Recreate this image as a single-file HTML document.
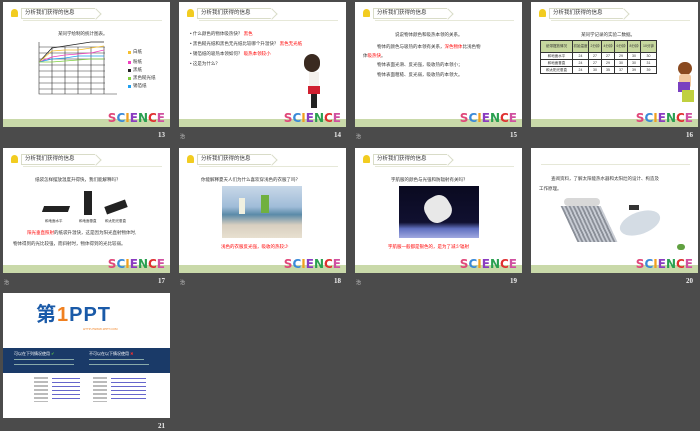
<!DOCTYPE html>
<html><head><meta charset="utf-8"><style>
*{margin:0;padding:0;box-sizing:border-box}
body{width:700px;height:431px;background:#4b4b4b;position:relative;overflow:hidden;font-family:"Liberation Sans","Noto Sans CJK SC",sans-serif}
.s{position:absolute;width:167px;height:125px;background:#fff;overflow:hidden}
.band{position:absolute;left:0;right:0;bottom:0;height:8px;background:#c9d9a9}
.hd{position:absolute;left:8px;top:6px;height:11px;width:90px}
.ic{position:absolute;left:0;top:1px;width:7px;height:8px;background:#f2cc20;border-radius:4px 4px 1px 1px}
.lb{position:absolute;left:10px;top:0;width:74px;height:11px;border:1px solid #d9dcc8;border-right:none;font-size:5.5px;line-height:9px;padding-left:3px;color:#333;background:#fff}
.lb:after{content:"";position:absolute;right:-5px;top:1px;width:7px;height:7px;border-top:1px solid #d9dcc8;border-right:1px solid #d9dcc8;transform:rotate(45deg);background:#fff}
.ln{position:absolute;left:20px;right:8px;top:18px;height:1px;background:#e6e8d8}
.sci{position:absolute;right:5px;bottom:2px;font-size:12px;font-weight:bold;letter-spacing:0px;font-family:"DejaVu Sans",sans-serif;line-height:13px}
.sci span:nth-child(1){color:#e0487a}.sci span:nth-child(2){color:#3a8ad8}.sci span:nth-child(3){color:#f0a020}.sci span:nth-child(4){color:#8a3cc0}.sci span:nth-child(5){color:#2aa050}.sci span:nth-child(6){color:#e03030}.sci span:nth-child(7){color:#d050a0}
.t{position:absolute;font-size:4.5px;color:#333;white-space:nowrap;line-height:6px}
.r{color:#f00}
.n{position:absolute;font-size:7px;color:#eee;font-weight:bold;font-family:"Liberation Serif",serif}
.z{position:absolute;font-size:5px;color:#ccc}
</style></head><body>

<!-- 13 -->
<div class="s" style="left:3px;top:2px">
<div class="hd"><div class="ic"></div><div class="lb">分析我们获得的信息</div></div><div class="ln"></div>
<div class="t" style="left:55px;top:29px">某同学绘制的统计图表。</div>
<svg style="position:absolute;left:14px;top:36px" width="110" height="62">
<g stroke="#333" stroke-width="0.6" fill="none">
<path d="M22 4V56H100"/>
<path d="M22 9H88M22 15H88M22 21H88M22 27H88M22 33H88M22 39H88M22 45H88M22 51H88M35 9V56M48 9V56M61 9V56M74 9V56M87 9V56"/>
</g>
<polyline points="22,24 35,10 48,8 61,6 74,4 87,4" stroke="#222" fill="none" stroke-width="0.8"/>
<polyline points="22,24 35,13 48,12 61,12 74,10 87,8" stroke="#f5c030" fill="none" stroke-width="0.8"/>
<polyline points="22,24 35,19 48,17 61,16 74,15 87,12" stroke="#f040c0" fill="none" stroke-width="0.8"/>
<polyline points="22,24 35,21 48,20 61,18 74,18 87,18" stroke="#20a0f0" fill="none" stroke-width="0.8"/>
<polyline points="22,24 35,24 48,23 61,22 74,21 87,21" stroke="#80d040" fill="none" stroke-width="0.8"/>
</svg>
<div style="position:absolute;left:125px;top:49px;width:3px;height:3px;background:#f5c030"></div><div class="t" style="left:130px;top:47px">白纸</div>
<div style="position:absolute;left:125px;top:59px;width:3px;height:3px;background:#f040c0"></div><div class="t" style="left:130px;top:57px">粉纸</div>
<div style="position:absolute;left:125px;top:67px;width:3px;height:3px;background:#222"></div><div class="t" style="left:130px;top:65px">黑纸</div>
<div style="position:absolute;left:125px;top:75px;width:3px;height:3px;background:#80d040"></div><div class="t" style="left:130px;top:73px">黑色糙光纸</div>
<div style="position:absolute;left:125px;top:83px;width:3px;height:3px;background:#20a0f0"></div><div class="t" style="left:130px;top:81px">锡箔纸</div>
<div class="band"></div><div class="sci"><span>S</span><span>C</span><span>I</span><span>E</span><span>N</span><span>C</span><span>E</span></div></div>
<div class="n" style="left:158px;top:131px">13</div>

<!-- 14 -->
<div class="s" style="left:179px;top:2px">
<div class="hd"><div class="ic"></div><div class="lb">分析我们获得的信息</div></div><div class="ln"></div>
<div class="t" style="left:11px;top:29px">• 什么颜色的物体吸热快？ <span class="r">黑色</span></div>
<div class="t" style="left:11px;top:39px">• 黑色糙光纸和黑色无光纸比较哪个升温快？ <span class="r">黑色无光纸</span></div>
<div class="t" style="left:11px;top:49px">• 锡箔纸的吸热本领如何？ <span class="r">吸热本领较小</span></div>
<div class="t" style="left:11px;top:59px">• 这是为什么？</div>
<div style="position:absolute;left:125px;top:52px;width:16px;height:18px;background:#3a2a20;border-radius:8px"></div>
<div style="position:absolute;left:130px;top:70px;width:10px;height:16px;background:#f4f0ec"></div>
<div style="position:absolute;left:129px;top:84px;width:12px;height:8px;background:#d02030"></div>
<div style="position:absolute;left:132px;top:92px;width:6px;height:14px;background:#222"></div>
<div class="band"></div><div class="sci"><span>S</span><span>C</span><span>I</span><span>E</span><span>N</span><span>C</span><span>E</span></div></div>
<div class="z" style="left:180px;top:133px">治</div><div class="n" style="left:334px;top:131px">14</div>

<!-- 15 -->
<div class="s" style="left:355px;top:2px">
<div class="hd"><div class="ic"></div><div class="lb">分析我们获得的信息</div></div><div class="ln"></div>
<div class="t" style="left:40px;top:30px">说说物体颜色和吸热本领的关系。</div>
<div class="t" style="left:22px;top:42px">物体的颜色与吸热的本领有关系，<span class="r">深色物体</span>比浅色物</div>
<div class="t" style="left:8px;top:51px">体<span class="r">吸热快</span>。</div>
<div class="t" style="left:22px;top:60px">物体表面光滑、反光强，吸收热的本领小；</div>
<div class="t" style="left:22px;top:70px">物体表面粗糙、反光弱，吸收热的本领大。</div>
<div class="band"></div><div class="sci"><span>S</span><span>C</span><span>I</span><span>E</span><span>N</span><span>C</span><span>E</span></div></div>
<div class="z" style="left:356px;top:133px">治</div><div class="n" style="left:510px;top:131px">15</div>

<!-- 16 -->
<div class="s" style="left:531px;top:2px">
<div class="hd"><div class="ic"></div><div class="lb">分析我们获得的信息</div></div><div class="ln"></div>
<div class="t" style="left:50px;top:30px">某同学记录的实验二数据。</div>
<table style="position:absolute;left:9px;top:38px;border-collapse:collapse;font-size:3.5px;color:#333;text-align:center" cellpadding="0">
<tr style="background:#c7d89f;height:12px"><td style="border:0.6px solid #333;width:32px">纸带摆放情况</td><td style="border:0.6px solid #333;width:16px">初始温度</td><td style="border:0.6px solid #333;width:13px">2分钟</td><td style="border:0.6px solid #333;width:13px">4分钟</td><td style="border:0.6px solid #333;width:13px">6分钟</td><td style="border:0.6px solid #333;width:13px">8分钟</td><td style="border:0.6px solid #333;width:16px">10分钟</td></tr>
<tr style="height:7px"><td style="border:0.6px solid #333">和地面水平</td><td style="border:0.6px solid #333">24</td><td style="border:0.6px solid #333">27</td><td style="border:0.6px solid #333">27</td><td style="border:0.6px solid #333">29</td><td style="border:0.6px solid #333">30</td><td style="border:0.6px solid #333">30</td></tr>
<tr style="height:7px"><td style="border:0.6px solid #333">和地面垂直</td><td style="border:0.6px solid #333">24</td><td style="border:0.6px solid #333">27</td><td style="border:0.6px solid #333">29</td><td style="border:0.6px solid #333">30</td><td style="border:0.6px solid #333">30</td><td style="border:0.6px solid #333">31</td></tr>
<tr style="height:7px"><td style="border:0.6px solid #333">和太阳光垂直</td><td style="border:0.6px solid #333">24</td><td style="border:0.6px solid #333">30</td><td style="border:0.6px solid #333">35</td><td style="border:0.6px solid #333">37</td><td style="border:0.6px solid #333">39</td><td style="border:0.6px solid #333">39</td></tr>
</table>
<div style="position:absolute;left:147px;top:60px;width:14px;height:13px;background:#8a4a20;border-radius:7px"></div>
<div style="position:absolute;left:148px;top:72px;width:12px;height:14px;background:#f2c8a0;border-radius:3px"></div>
<div style="position:absolute;left:147px;top:80px;width:12px;height:10px;background:#7a40c0"></div>
<div style="position:absolute;left:151px;top:88px;width:12px;height:12px;background:#c0d040"></div>
<div class="band"></div><div class="sci"><span>S</span><span>C</span><span>I</span><span>E</span><span>N</span><span>C</span><span>E</span></div></div>
<div class="n" style="left:686px;top:131px">16</div>

<!-- 17 -->
<div class="s" style="left:3px;top:148px">
<div class="hd"><div class="ic"></div><div class="lb">分析我们获得的信息</div></div><div class="ln"></div>
<div class="t" style="left:32px;top:29px">纸袋怎样摆放温度升得快，我们能解释吗？</div>
<div style="position:absolute;left:40px;top:58px;width:26px;height:6px;background:#222;transform:skewX(-20deg)"></div>
<div style="position:absolute;left:81px;top:43px;width:8px;height:24px;background:#222"></div>
<div style="position:absolute;left:102px;top:55px;width:22px;height:8px;background:#222;transform:rotate(-20deg)"></div>
<div class="t" style="left:42px;top:70px;font-size:3.5px">和地面水平</div>
<div class="t" style="left:76px;top:70px;font-size:3.5px">和地面垂直</div>
<div class="t" style="left:102px;top:70px;font-size:3.5px">和太阳光垂直</div>
<div class="t" style="left:24px;top:82px"><span class="r">阳光垂直照射</span>的纸袋升温快，这是因为阳光直射物体时,</div>
<div class="t" style="left:10px;top:93px">物体得到的光比较强，而斜射时，物体得到的光比较弱。</div>
<div class="band"></div><div class="sci"><span>S</span><span>C</span><span>I</span><span>E</span><span>N</span><span>C</span><span>E</span></div></div>
<div class="z" style="left:4px;top:279px">治</div><div class="n" style="left:158px;top:277px">17</div>

<!-- 18 -->
<div class="s" style="left:179px;top:148px">
<div class="hd"><div class="ic"></div><div class="lb">分析我们获得的信息</div></div><div class="ln"></div>
<div class="t" style="left:22px;top:29px">你能解释夏天人们为什么喜欢穿浅色的衣服了吗？</div>
<div style="position:absolute;left:43px;top:38px;width:80px;height:52px;background:linear-gradient(#c8d8e8 0%,#a0bcd8 40%,#5a8aa8 55%,#d8cfc0 75%,#e8e0d0 100%)"></div>
<div style="position:absolute;left:82px;top:47px;width:8px;height:18px;background:#70b040"></div>
<div style="position:absolute;left:60px;top:50px;width:6px;height:16px;background:#f0f0e0"></div>
<div class="t r" style="left:42px;top:96px">浅色的衣服反光强，吸收的热较少</div>
<div class="band"></div><div class="sci"><span>S</span><span>C</span><span>I</span><span>E</span><span>N</span><span>C</span><span>E</span></div></div>
<div class="z" style="left:180px;top:279px">治</div><div class="n" style="left:334px;top:277px">18</div>

<!-- 19 -->
<div class="s" style="left:355px;top:148px">
<div class="hd"><div class="ic"></div><div class="lb">分析我们获得的信息</div></div><div class="ln"></div>
<div class="t" style="left:36px;top:29px">宇航服的颜色与光强和防辐射有关吗？</div>
<div style="position:absolute;left:44px;top:38px;width:80px;height:52px;background:linear-gradient(#0a0a20 0%,#101030 70%,#6070c0 82%,#a0a8e0 100%)"></div>
<div style="position:absolute;left:70px;top:48px;width:26px;height:26px;background:#e8e8e8;border-radius:40%;transform:rotate(-30deg)"></div>
<div class="t r" style="left:33px;top:96px">宇航服一般都是银色的，是为了减少辐射</div>
<div class="band"></div><div class="sci"><span>S</span><span>C</span><span>I</span><span>E</span><span>N</span><span>C</span><span>E</span></div></div>
<div class="z" style="left:356px;top:279px">治</div><div class="n" style="left:510px;top:277px">19</div>

<!-- 20 -->
<div class="s" style="left:531px;top:148px">
<div class="ln" style="left:10px;top:16px"></div>
<div class="t" style="left:20px;top:28px">查阅资料，了解太阳能热水器和太阳灶的设计、构造及</div>
<div class="t" style="left:8px;top:38px">工作原理。</div>
<div style="position:absolute;left:33px;top:50px;width:36px;height:8px;background:#d8d8d8;border-radius:4px"></div>
<div style="position:absolute;left:38px;top:58px;width:40px;height:36px;background:repeating-linear-gradient(90deg,#8a8f98 0 2px,#c8ccd4 2px 4px);transform:skewX(25deg)"></div>
<div style="position:absolute;left:88px;top:64px;width:42px;height:22px;background:#d4dce4;border-radius:50%;transform:rotate(-20deg)"></div>
<div style="position:absolute;left:98px;top:57px;width:10px;height:5px;background:#333"></div>
<div style="position:absolute;left:146px;top:96px;width:8px;height:6px;background:#60a040;border-radius:3px"></div>
<div class="band"></div><div class="sci"><span>S</span><span>C</span><span>I</span><span>E</span><span>N</span><span>C</span><span>E</span></div></div>
<div class="n" style="left:686px;top:277px">20</div>

<!-- 21 -->
<div class="s" style="left:3px;top:293px">
<div style="position:absolute;left:33px;top:11px;font-size:20px;font-weight:bold;color:#1a5aa8;line-height:22px;letter-spacing:1px">第<span style="color:#f08020">1</span>PPT</div>
<div style="position:absolute;left:80px;top:34px;font-size:3px;color:#f08020">HTTP://WWW.1PPT.COM</div>
<div style="position:absolute;left:0;right:0;top:55px;height:25px;background:#1a3a68"></div>
<div class="t" style="left:11px;top:58px;color:#fff;font-size:4px">可以在下列情况使用 <span style="color:#60d040">✔</span></div>
<div class="t" style="left:86px;top:58px;color:#fff;font-size:4px">不可以在以下情况使用 <span style="color:#f03030">✖</span></div>
<div style="position:absolute;left:11px;top:66px;width:60px;height:1px;background:#8aa"></div>
<div style="position:absolute;left:11px;top:71px;width:60px;height:1px;background:#8aa"></div>
<div style="position:absolute;left:86px;top:66px;width:55px;height:1px;background:#8aa"></div>
<div style="position:absolute;left:86px;top:71px;width:60px;height:1px;background:#8aa"></div>
<div style="position:absolute;left:31px;top:84px;width:14px;height:25px;background:repeating-linear-gradient(#bbb 0 2px,#fff 2px 4px)"></div>
<div style="position:absolute;left:49px;top:85px;width:28px;height:22px;background:repeating-linear-gradient(#66c 0 1px,#fff 1px 4px)"></div>
<div style="position:absolute;left:90px;top:84px;width:14px;height:25px;background:repeating-linear-gradient(#bbb 0 2px,#fff 2px 4px)"></div>
<div style="position:absolute;left:108px;top:85px;width:35px;height:22px;background:repeating-linear-gradient(#66c 0 1px,#fff 1px 4px)"></div>
</div>
<div class="n" style="left:158px;top:422px">21</div>

</body></html>
